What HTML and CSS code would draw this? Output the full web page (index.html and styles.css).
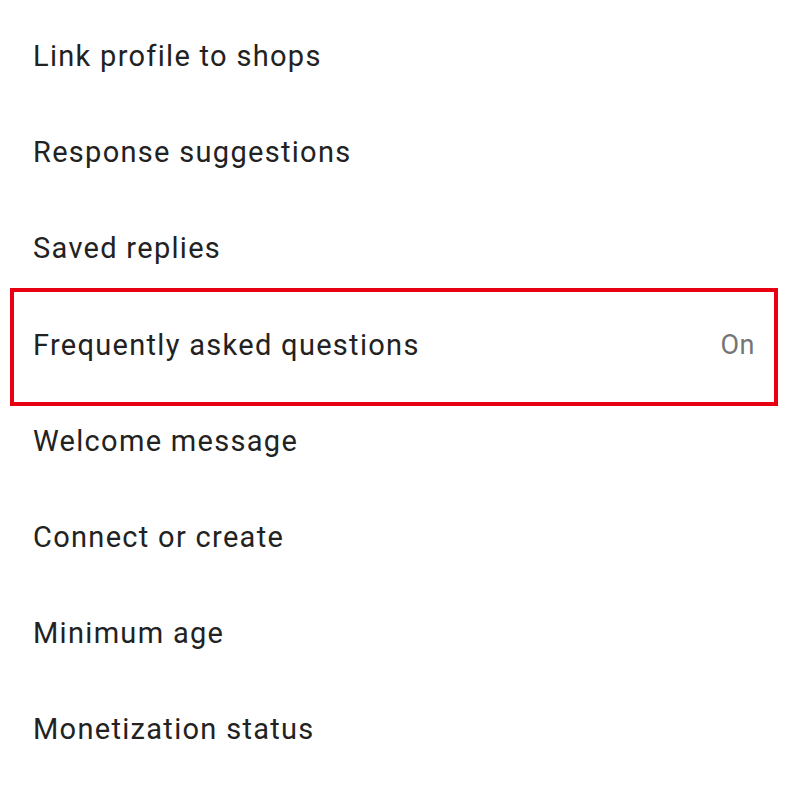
FILE: index.html
```html
<!DOCTYPE html>
<html>
<head>
    <link rel="stylesheet" href="styles.css">
</head>
<body>
    <div class="settings">
        <div class="row"><span class="label">Link profile to shops</span></div>
        <div class="row"><span class="label">Response suggestions</span></div>
        <div class="row"><span class="label">Saved replies</span></div>
        <div class="row highlight">
            <span class="label">Frequently asked questions</span>
            <span class="value">On</span>
        </div>
        <div class="row"><span class="label">Welcome message</span></div>
        <div class="row"><span class="label">Connect or create</span></div>
        <div class="row"><span class="label">Minimum age</span></div>
        <div class="row"><span class="label">Monetization status</span></div>
    </div>
</body>
</html>
```

FILE: styles.css
```css
* {
    box-sizing: border-box;
}

body {
    font-family: Roboto, "Noto Sans", sans-serif;
    margin: 0;
    padding: 0;
    background-color: #fff;
}

.settings {
    padding-top: 8px;
}

.row {
    position: relative;
    display: flex;
    align-items: center;
    justify-content: space-between;
    height: 96.2px;
    padding: 0 33px 0 33px;
}

.label {
    font-size: 29px;
    letter-spacing: 1.3px;
    color: #222;
}

.value {
    font-size: 27px;
    letter-spacing: 0.5px;
    color: #757575;
}

.highlight::after {
    content: "";
    position: absolute;
    top: -9px;
    bottom: -13px;
    left: 10px;
    right: 10px;
    border: 4px solid #e60012;
}
```
